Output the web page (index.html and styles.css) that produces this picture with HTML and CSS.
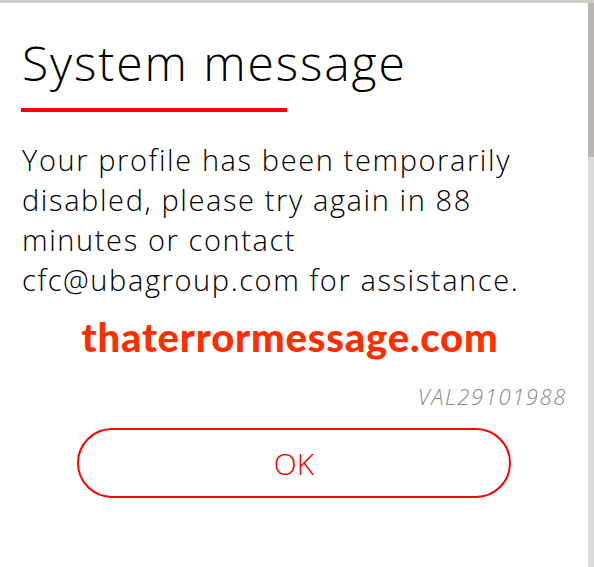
FILE: index.html
```html
<!DOCTYPE html>
<html lang="en">
<head>
<meta charset="utf-8">
<title>System message</title>
<link rel="stylesheet" href="styles.css">
</head>
<body>
<div class="page">
  <main class="dialog">
    <h1 class="title">System message</h1>
    <div class="rule"></div>
    <p class="message">Your profile has been temporarily disabled, please try again in 88 minutes or contact cfc@ubagroup.com for assistance.</p>
    <div class="watermark">thaterrormessage.com</div>
    <div class="code">VAL29101988</div>
    <div class="actions">
      <button class="ok" type="button">OK</button>
    </div>
  </main>
  <aside class="side">
    <div class="thumb"></div>
    <div class="track"></div>
  </aside>
</div>
</body>
</html>
```

FILE: styles.css
```css
html, body {
  margin: 0;
  padding: 0;
  height: 100%;
}
body {
  background: #cfcbc7;
  font-family: "Open Sans", "Liberation Sans", sans-serif;
  color: #111;
  overflow: hidden;
}
.page {
  display: flex;
  height: 567px;
  padding-top: 3px;
  box-sizing: border-box;
}
.dialog {
  width: 588px;
  flex: none;
  background: #fff;
  padding: 0 22px;
  box-sizing: border-box;
}
.title {
  margin: 32px 0 0 0;
  font-size: 48px;
  line-height: 56px;
  font-weight: 300;
  color: #000;
  letter-spacing: 1.9px;
}
.rule {
  width: 266px;
  height: 4px;
  background: #f00;
  margin: 17px 0 0 -1px;
}
.message {
  margin: 28px 0 0 0;
  font-size: 29px;
  line-height: 40px;
  font-weight: 350;
  color: #000;
  letter-spacing: 1.6px;
}
.watermark {
  margin-top: 12px;
  text-align: center;
  font-family: Lato, "Open Sans", sans-serif;
  font-weight: 900;
  font-size: 40px;
  line-height: 50px;
  letter-spacing: 0.8px;
  color: #ff2e00;
  padding-right: 8px;
}
.code {
  margin-top: 20px;
  text-align: right;
  font-style: italic;
  font-weight: 300;
  font-size: 22px;
  line-height: 28px;
  color: #888;
  letter-spacing: 1.6px;
  margin-right: -1px;
}
.actions {
  display: flex;
  justify-content: center;
  margin-top: 18px;
}
.ok {
  width: 434px;
  height: 70px;
  border: 2px solid #f00;
  border-radius: 35px;
  background: #fff;
  color: #e00;
  font-family: "Open Sans", "Liberation Sans", sans-serif;
  font-size: 30px;
  font-weight: 300;
  padding: 0;
}
.side {
  flex: 1;
  display: flex;
  flex-direction: column;
}
.thumb {
  height: 154px;
  background: #bab6b2;
}
.track {
  flex: 1;
  background: #dadada;
}
```
